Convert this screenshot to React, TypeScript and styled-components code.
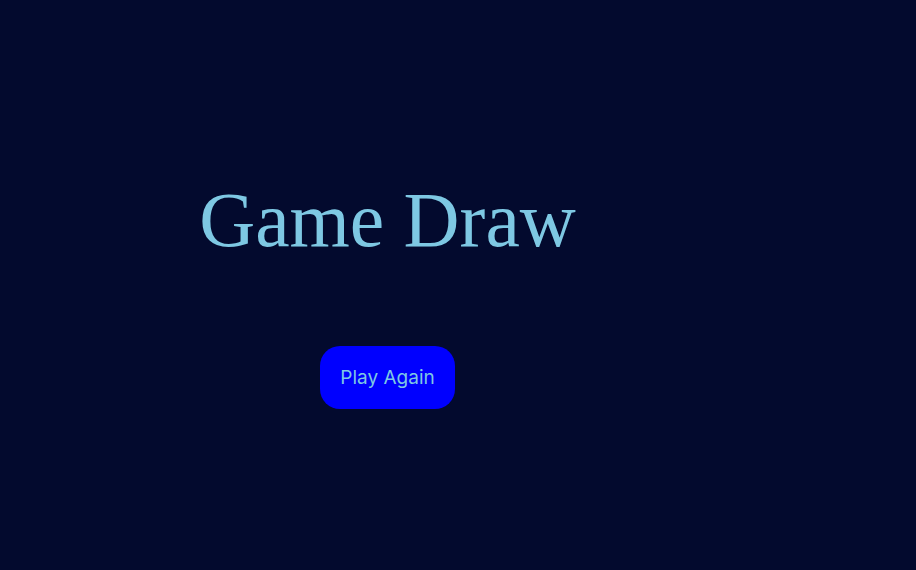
import React from "react";
import styled, { createGlobalStyle } from "styled-components";

const Global = createGlobalStyle`
  html, body { margin: 0; padding: 0; background: #030a2e; }
  body { min-height: 570px; }
`;

const Screen = styled.main`
  width: 775px;
  height: 570px;
  display: flex;
  flex-direction: column;
  align-items: center;
  padding-top: 172px;
  box-sizing: border-box;
`;

const Title = styled.h1`
  margin: 0;
  font-family: "Liberation Serif", "Times New Roman", serif;
  font-weight: 400;
  font-size: 77.5px;
  line-height: 96px;
  color: #7ec8e3;
`;

const PlayButton = styled.button`
  margin-top: 78px;
  width: 135px;
  height: 63px;
  border: none;
  border-radius: 20px;
  background: #0000ff;
  color: #7ec8e3;
  font-family: Inter, "Liberation Sans", sans-serif;
  font-size: 19px;
  cursor: pointer;
`;

export default function App() {
  return (
    <>
      <Global />
      <Screen>
        <Title>Game Draw</Title>
        <PlayButton>Play Again</PlayButton>
      </Screen>
    </>
  );
}
